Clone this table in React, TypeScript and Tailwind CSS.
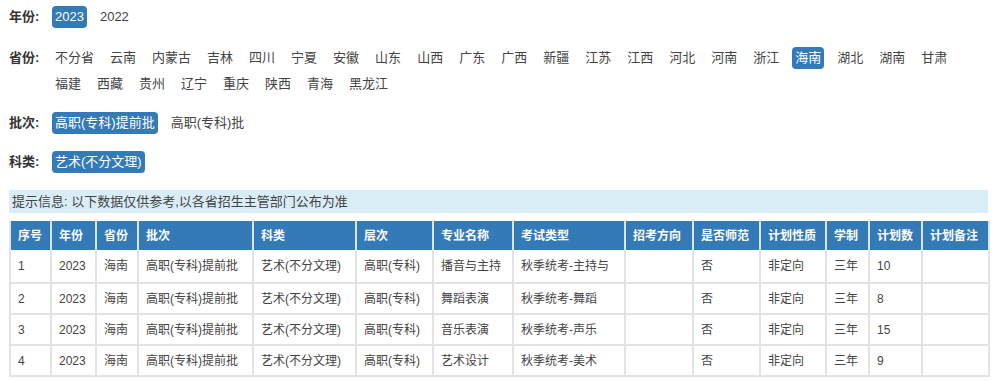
import { useState } from "react";

const FONT = '"Liberation Sans", "Noto Sans CJK SC", Arial, sans-serif';

const years = ["2023", "2022"];
const provinces = [
  "不分省", "云南", "内蒙古", "吉林", "四川", "宁夏", "安徽", "山东", "山西", "广东", "广西",
  "新疆", "江苏", "江西", "河北", "河南", "浙江", "海南", "湖北", "湖南", "甘肃",
  "福建", "西藏", "贵州", "辽宁", "重庆", "陕西", "青海", "黑龙江",
];
const batches = ["高职(专科)提前批", "高职(专科)批"];
const subjects = ["艺术(不分文理)"];

const columns = [
  { name: "序号", w: "w-[41px]" },
  { name: "年份", w: "w-[45px]" },
  { name: "省份", w: "w-[42px]" },
  { name: "批次", w: "w-[115px]" },
  { name: "科类", w: "w-[103px]" },
  { name: "层次", w: "w-[77px]" },
  { name: "专业名称", w: "w-[80px]" },
  { name: "考试类型", w: "w-[112px]" },
  { name: "招考方向", w: "w-[68px]" },
  { name: "是否师范", w: "w-[67px]" },
  { name: "计划性质", w: "w-[66px]" },
  { name: "学制", w: "w-[43px]" },
  { name: "计划数", w: "w-[53px]" },
  { name: "计划备注", w: "w-[67px]" },
];

const rows = [
  ["1", "2023", "海南", "高职(专科)提前批", "艺术(不分文理)", "高职(专科)", "播音与主持", "秋季统考-主持与", "", "否", "非定向", "三年", "10", ""],
  ["2", "2023", "海南", "高职(专科)提前批", "艺术(不分文理)", "高职(专科)", "舞蹈表演", "秋季统考-舞蹈", "", "否", "非定向", "三年", "8", ""],
  ["3", "2023", "海南", "高职(专科)提前批", "艺术(不分文理)", "高职(专科)", "音乐表演", "秋季统考-声乐", "", "否", "非定向", "三年", "15", ""],
  ["4", "2023", "海南", "高职(专科)提前批", "艺术(不分文理)", "高职(专科)", "艺术设计", "秋季统考-美术", "", "否", "非定向", "三年", "9", ""],
];

function FilterRow({
  label,
  items,
  value,
  onPick,
  className,
}: {
  label: string;
  items: string[];
  value: string;
  onPick: (v: string) => void;
  className?: string;
}) {
  return (
    <div className={"flex items-start " + (className ?? "")}>
      <span className="w-[43px] shrink-0 font-bold text-[#333] leading-[26px]">{label}</span>
      <div className="flex flex-wrap w-[930px]">
        {items.map((it) => (
          <button
            key={it}
            onClick={() => onPick(it)}
            className={
              "mr-[10px] my-[2px] px-[3px] h-[22px] leading-[22px] rounded-[4px] whitespace-nowrap " +
              (it === value ? "bg-[#337ab7] text-white" : "text-[#444]")
            }
          >
            {it}
          </button>
        ))}
      </div>
    </div>
  );
}

export default function App() {
  const [year, setYear] = useState("2023");
  const [prov, setProv] = useState("海南");
  const [batch, setBatch] = useState("高职(专科)提前批");
  const [subject, setSubject] = useState("艺术(不分文理)");

  return (
    <div className="w-[1000px] h-[382px] bg-white pl-[9px] pr-[12px] text-[13px]" style={{ fontFamily: FONT }}>
      <FilterRow label="年份:" items={years} value={year} onPick={setYear} className="pt-[4px]" />
      <FilterRow label="省份:" items={provinces} value={prov} onPick={setProv} className="mt-[15px]" />
      <FilterRow label="批次:" items={batches} value={batch} onPick={setBatch} className="mt-[13px]" />
      <FilterRow label="科类:" items={subjects} value={subject} onPick={setSubject} className="mt-[13px]" />

      <div className="mt-[15px] h-[23px] leading-[23px] bg-[#d9edf7] text-[#444] pl-[3px]">
        提示信息: 以下数据仅供参考,以各省招生主管部门公布为准
      </div>

      <table className="mt-[8px] w-[979px] table-fixed border-collapse text-[12px] text-[#444]">
        <thead>
          <tr className="bg-[#337ab7] text-white">
            {columns.map((c) => (
              <th
                key={c.name}
                className={c.w + " h-[29px] px-[7px] text-left font-bold border-x-2 border-[#dbe6f1] whitespace-nowrap"}
              >
                {c.name}
              </th>
            ))}
          </tr>
        </thead>
        <tbody>
          {rows.map((r, i) => (
            <tr key={i} className={i === 0 ? "h-[33px]" : "h-[31px]"}>
              {r.map((v, j) => (
                <td
                  key={j}
                  className="px-[7px] border-x-2 border-b-2 border-[#e3e3e3] whitespace-nowrap overflow-hidden"
                >
                  {v}
                </td>
              ))}
            </tr>
          ))}
        </tbody>
      </table>
    </div>
  );
}
